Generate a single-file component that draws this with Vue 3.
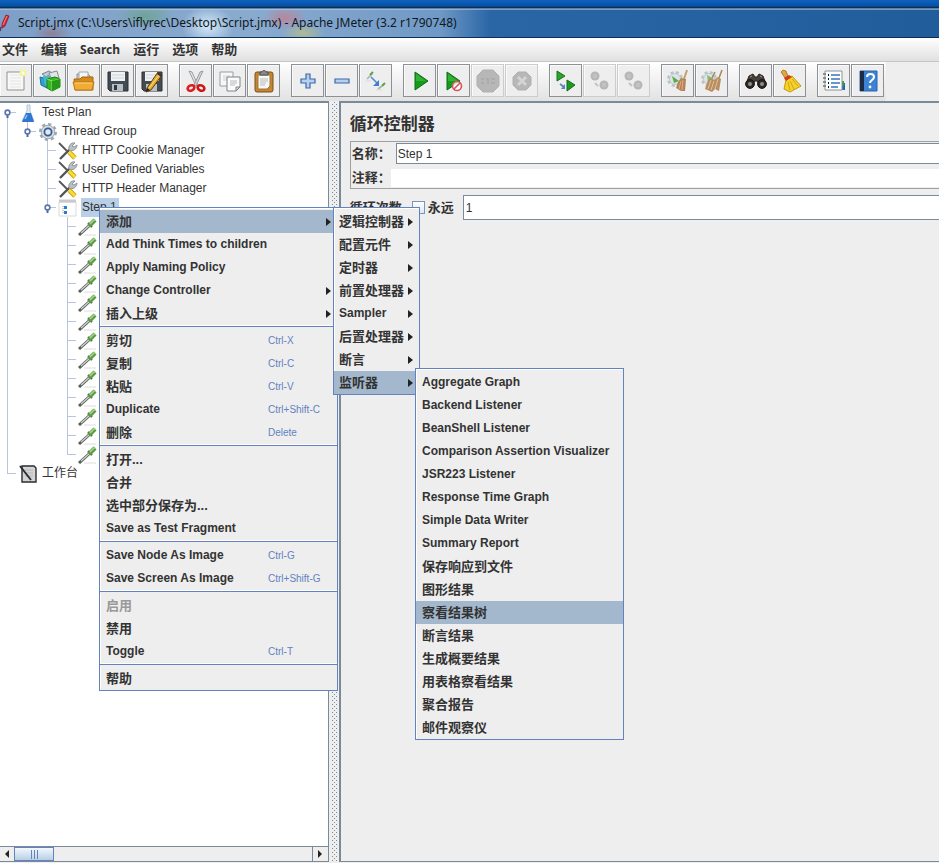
<template>
  <div class="window">
    <header class="titlebar">
      <svg class="app-icon" width="10" height="18" viewBox="0 0 10 18">
        <path d="M6 1L9 2L5 12L2 14L2 10Z" fill="#d8232f" stroke="#8d1a3a" stroke-width=".8" />
        <path d="M7 2L3 11" stroke="#ff8a70" />
        <path d="M1 13L0 17" stroke="#5b3766" stroke-width="1.5" />
      </svg>
      <span class="title">Script.jmx (C:\Users\iflyrec\Desktop\Script.jmx) - Apache JMeter (3.2 r1790748)</span>
    </header>

    <nav class="menubar">
      <button v-for="m in menus" :key="m" type="button" :class="{ latin: !isCjk(m) }">{{ m }}</button>
    </nav>

    <div class="toolbar">
      <div v-for="(group, gi) in toolGroups" :key="gi" class="tool-group">
        <button
          v-for="t in group"
          :key="t.name"
          type="button"
          class="tool"
          :disabled="t.off"
          :aria-label="t.name"
        >
          <svg width="24" height="24" viewBox="0 0 24 24" fill="none" v-html="icons[t.icon]"></svg>
        </button>
      </div>
    </div>

    <main class="body">
      <section class="tree-pane">
        <ul class="tree">
          <li v-for="(row, i) in rows" :key="i" class="tree-row">
            <svg v-for="(g, gi) in row.guides" :key="gi" class="guide" width="20" height="19" viewBox="0 0 20 19">
              <path :d="guidePaths[g]" fill="none" stroke="#b8c5de" />
              <template v-if="g.startsWith('node')">
                <path d="M10.5 11V15" stroke="#4a6ba5" stroke-width="2" />
                <circle cx="10.5" cy="9.5" r="2.4" fill="#fff" stroke="#5a78ad" stroke-width="1.6" />
              </template>
            </svg>
            <svg class="node-icon" width="20" height="19" viewBox="0 0 20 19" fill="none" v-html="nodeIcons[row.icon]"></svg>
            <span v-if="row.label" class="node-label" :class="{ selected: row.selected }">{{ row.label }}</span>
          </li>
        </ul>
        <div class="scrollbar">
          <button type="button" class="scroll-btn" aria-label="left">
            <svg width="6" height="8" viewBox="0 0 6 8"><path d="M5 0V8L1 4Z" fill="#222" /></svg>
          </button>
          <div class="track"><div class="thumb"><i></i><i></i><i></i></div></div>
          <button type="button" class="scroll-btn right" aria-label="right">
            <svg width="6" height="8" viewBox="0 0 6 8"><path d="M1 0V8L5 4Z" fill="#222" /></svg>
          </button>
        </div>
      </section>

      <div class="splitter"></div>

      <section class="editor">
        <h1>循环控制器</h1>
        <div class="name-box">
          <div class="field">
            <label for="name">名称：</label>
            <input id="name" v-model="name" class="boxed" type="text" />
          </div>
          <div class="field">
            <label for="comment">注释：</label>
            <input id="comment" v-model="comment" type="text" />
          </div>
        </div>
        <div class="loop">
          <label for="count">循环次数</label>
          <input id="forever" v-model="forever" type="checkbox" />
          <label for="forever" class="forever">永远</label>
          <input id="count" v-model="count" class="count" type="text" />
        </div>
      </section>
    </main>

    <ul class="popup context">
      <template v-for="(item, i) in contextMenu" :key="i">
        <li v-if="item.sep" class="sep"></li>
        <li v-else class="item" :class="{ active: item.children }">
          <button type="button" :disabled="item.off">
            <span :class="{ cjk: isCjk(item.label) }">{{ item.label }}</span>
            <kbd v-if="item.key">{{ item.key }}</kbd>
            <svg v-if="item.more" class="arrow" width="5" height="8" viewBox="0 0 5 8"><path d="M0 0V8L5 4Z" /></svg>
          </button>
          <ul v-if="item.children" class="popup sub add">
            <li v-for="c in item.children" :key="c.label" class="item" :class="{ active: c.children }">
              <button type="button">
                <span :class="{ cjk: isCjk(c.label) }">{{ c.label }}</span>
                <svg class="arrow" width="5" height="8" viewBox="0 0 5 8"><path d="M0 0V8L5 4Z" /></svg>
              </button>
              <ul v-if="c.children" class="popup sub listeners">
                <li v-for="l in c.children" :key="l" class="item" :class="{ active: l === current }">
                  <button type="button" @click="current = l"><span :class="{ cjk: isCjk(l) }">{{ l }}</span></button>
                </li>
              </ul>
            </li>
          </ul>
        </li>
      </template>
    </ul>
  </div>
</template>

<script setup>
import { ref } from 'vue'

const name = ref('Step 1')
const comment = ref('')
const count = ref('1')
const forever = ref(false)
const current = ref('察看结果树')

const isCjk = (text) => /[\u4e00-\u9fff]/.test(text)

const menus = ['文件', '编辑', 'Search', '运行', '选项', '帮助']

const toolGroups = [
  [
    { name: 'New', icon: 'file' },
    { name: 'Templates', icon: 'templates' },
    { name: 'Open', icon: 'open' },
    { name: 'Save', icon: 'save' },
    { name: 'Save as', icon: 'saveAs' },
  ],
  [
    { name: 'Cut', icon: 'cut' },
    { name: 'Copy', icon: 'copy' },
    { name: 'Paste', icon: 'paste' },
  ],
  [
    { name: 'Expand all', icon: 'plus' },
    { name: 'Collapse all', icon: 'minus' },
    { name: 'Toggle', icon: 'toggle' },
  ],
  [
    { name: 'Start', icon: 'start' },
    { name: 'Start no pauses', icon: 'startNoPause' },
    { name: 'Stop', icon: 'stop', off: true },
    { name: 'Shutdown', icon: 'shutdown', off: true },
  ],
  [
    { name: 'Remote start all', icon: 'remoteStart' },
    { name: 'Remote stop all', icon: 'remoteStop', off: true },
    { name: 'Remote shutdown all', icon: 'remoteStop', off: true },
  ],
  [
    { name: 'Clear', icon: 'clear' },
    { name: 'Clear all', icon: 'clearAll' },
  ],
  [
    { name: 'Find', icon: 'find' },
    { name: 'Reset search', icon: 'broom' },
  ],
  [
    { name: 'Function helper', icon: 'list' },
    { name: 'Help', icon: 'help' },
  ],
]

const disk = `
  <path d="M2 3H22V22H4L2 20Z" fill="#444b52" stroke="#2b3034"/>
  <path d="M5 3H19V12H5Z" fill="#eef2f4"/>
  <path d="M6 6H18M6 9H18" stroke="#cdd3d8"/>
  <path d="M6 15H17V22H6Z" fill="#b9c0c5"/>
  <path d="M8 16H11V21H8Z" fill="#30363b"/>`

const gearBrush = `
  <circle cx="9" cy="10" r="6.5" stroke="#b9c4ca" stroke-width="3" stroke-dasharray="3 2.1"/>
  <circle cx="9" cy="10" r="5.5" fill="#dce4e8" stroke="#bcc7cd"/>`

const icons = {
  file: `
    <path d="M3 3H20V21H3Z" fill="#f7f8f7" stroke="#90938f"/>
    <path d="M6 6H17M6 9H17M6 12H17M6 15H17M6 18H17" stroke="#e3e5e3"/>
    <circle cx="19" cy="4" r="3.5" fill="#f5f3a0"/><circle cx="19" cy="4" r="1.5" fill="#fffde0"/>`,
  templates: `
    <path d="M4 5L11 2L14 4L8 8Z" fill="#c5cbd0" stroke="#7d868c"/>
    <path d="M11 4L19 2L21 9L13 9Z" fill="#dfe5e9" stroke="#858e94"/>
    <path d="M2 8L9 10V19L3 16Z" fill="#2f9fd0" stroke="#1e6f9d"/>
    <path d="M5 7L12 7V19L7 16Z" fill="#43b9c9"/>
    <path d="M9 10L17 8L22 10V18L14 22L9 19Z" fill="#39b822" stroke="#218414"/>
    <path d="M9 10L14 12L22 10M14 12V22" stroke="#8be271"/>
    <path d="M14 12L22 10V18L14 22Z" fill="#249a17"/>`,
  open: `
    <path d="M5 5H16L18 7V14H5Z" fill="#cfd3d6" stroke="#8c9195"/>
    <path d="M7 3H16V12H7Z" fill="#f5f6f6" stroke="#a2a6a9"/>
    <path d="M2 10H8L10 8H21V21H3Z" fill="#d98b1a" stroke="#a9660e"/>
    <path d="M1 13H22L20 21H3Z" fill="#f0ad36" stroke="#bb7915"/>
    <path d="M3 14H20" stroke="#fbd37f"/>`,
  save: disk,
  saveAs: `${disk}
    <path d="M7 19L18 3L22 6L11 21L6 23Z" fill="#e8a92c" stroke="#58411a"/>
    <path d="M9 19L20 5" stroke="#ffe086"/><path d="M6 23L7 19L10 21Z" fill="#222"/>
    <path d="M18 3L22 6L21 8L17 5Z" fill="#333"/>`,
  cut: `
    <path d="M5 2L8 3L14 16L12 17Z" fill="#dfe3e5" stroke="#898f93" stroke-width=".8"/>
    <path d="M19 2L16 3L10 16L12 17Z" fill="#cdd3d6" stroke="#898f93" stroke-width=".8"/>
    <ellipse cx="7" cy="19" rx="3.5" ry="2.6" transform="rotate(-25 7 19)" stroke="#e01b1b" stroke-width="2.6"/>
    <ellipse cx="17" cy="19" rx="3.5" ry="2.6" transform="rotate(25 17 19)" stroke="#d01414" stroke-width="2.6"/>`,
  copy: `
    <path d="M2 3H15V17H2Z" fill="#f7f8f8" stroke="#999d9f"/>
    <path d="M5 7H12M5 9H12M5 11H12" stroke="#cdd0d2"/>
    <path d="M9 8H22V18L18 22H9Z" fill="#fbfbfb" stroke="#7e8385"/>
    <path d="M12 12H19M12 14H19M12 16H17" stroke="#b3b7b9"/><path d="M18 22V18H22Z" fill="#d5d8da" stroke="#7e8385"/>`,
  paste: `
    <rect x="3" y="3" width="18" height="20" rx="2" fill="#c48631" stroke="#7d501a"/>
    <path d="M6 6H18V17L15 20H6Z" fill="#f6f7f7" stroke="#a3743a"/>
    <path d="M8 10H16M8 12H16M8 14H14M8 16H13" stroke="#b5babc"/>
    <path d="M8 3H10C10 1 14 1 14 3H16V6H8Z" fill="#858b8f" stroke="#4b5154"/>`,
  plus: `<path d="M10 5H14V10H19V14H14V19H10V14H5V10H10Z" fill="#b7d0ee" stroke="#3a68a8" stroke-width="1.2"/>`,
  minus: `<path d="M5 10H19V14H5Z" fill="#b7d0ee" stroke="#3a68a8" stroke-width="1.2"/>`,
  toggle: `
    <path d="M3 10L8 5" stroke="#a9b4ad" stroke-width="1.6"/><path d="M6 6L9 3" stroke="#5d9f50" stroke-width="2"/>
    <path d="M14 20L18 17" stroke="#a9b4ad" stroke-width="1.6"/><path d="M18 17L21 14" stroke="#5d9f50" stroke-width="2"/>
    <path d="M7 8L13 14" stroke="#4d8ad3" stroke-width="1.6"/><path d="M15 11V17H9Z" fill="#3d7fd0"/>
    <path d="M2 12H7M12 21H18" stroke="#d9dcd9"/>`,
  start: `<path d="M7 3V21L20 12Z" fill="#159a1b" stroke="#0c6e14"/><path d="M8 5V12H18Z" fill="#37b037"/>`,
  startNoPause: `
    <path d="M5 3V21L18 12Z" fill="#159a1b" stroke="#0c6e14"/><path d="M6 5V12H16Z" fill="#37b037"/>
    <circle cx="15" cy="17" r="4.5" fill="#fff" fill-opacity=".8" stroke="#d2555e" stroke-width="1.6"/>
    <path d="M12 20L18 14" stroke="#d2555e" stroke-width="1.6"/>`,
  stop: `
    <path d="M7 1H17L23 7V17L17 23H7L1 17V7Z" fill="#b7b7b7" stroke="#b0b0b0"/>
    <path d="M5 10H8M5 14H8M10 10H13M12 10V15M15 10H19M15 14H19" stroke="#a9a9a9" stroke-width="1.5"/>`,
  shutdown: `
    <path d="M8 3H16L21 8V16L16 21H8L3 16V8Z" fill="#b7b7b7" stroke="#b0b0b0"/>
    <path d="M8 8L16 16M16 8L8 16" stroke="#d4d4d4" stroke-width="3"/>`,
  remoteStart: `
    <path d="M3 2V12L11 7Z" fill="#2ca42b" stroke="#16751b"/>
    <path d="M13 11V22L21 16Z" fill="#1d9a22" stroke="#116b17"/>
    <path d="M6 15L10 18" stroke="#5b83bd" stroke-width="1.6"/><path d="M11 15V20H7Z" fill="#5b83bd"/>`,
  remoteStop: `
    <circle cx="7" cy="7" r="4.5" fill="#b7b7b7"/><path d="M5 6H9M5 8H9" stroke="#cdcdcd"/>
    <circle cx="16" cy="16" r="4.5" fill="#b7b7b7"/><path d="M14 15H18M14 17H18" stroke="#cdcdcd"/>
    <path d="M7 14L10 17" stroke="#c3c3c3" stroke-width="2"/>`,
  clear: `${gearBrush}
    <path d="M6 7L13 12L8 14Z" fill="#58ad46"/>
    <path d="M21 1L18 10" stroke="#c2a06c" stroke-width="2"/>
    <path d="M12 13L15 9L20 10L19 22L15 22L10 19Z" fill="#b5835a"/>
    <path d="M15 12L13 20M17 11L16 21" stroke="#ddb080"/>`,
  clearAll: `${gearBrush}
    <path d="M7 6L14 10L8 13Z" fill="#7dbf66"/>
    <path d="M15 3L12 9M22 1L19 9" stroke="#a98a5d" stroke-width="1.6"/>
    <path d="M8 11L11 9L14 11L18 8L21 10L19 22L15 20L12 23L5 20Z" fill="#b98d62"/>
    <path d="M11 11L8 20M14 12L11 21M18 10L15 20" stroke="#dec19a"/>`,
  find: `
    <path d="M5 7L9 5L11 8H13L15 5L19 7L22 15H15L13 12H11L9 15H2Z" fill="#47413c" stroke="#28231f"/>
    <circle cx="6" cy="15" r="4.4" fill="#2d2926" stroke="#171412"/><circle cx="18" cy="15" r="4.4" fill="#2d2926" stroke="#171412"/>
    <circle cx="6" cy="15" r="2" fill="#8e8d88"/><circle cx="18" cy="15" r="2" fill="#8e8d88"/>
    <path d="M6 8L8 7M16 7L18 8" stroke="#a09a91"/>`,
  broom: `
    <path d="M3 3L5 1L8 2L10 7L7 9L5 6Z" fill="#e0a53c" stroke="#a1701c" stroke-width=".8"/>
    <path d="M8 11L14 7L23 17L12 23L6 20Z" fill="#f3d329" stroke="#c5970f"/>
    <path d="M6 9L11 6L14 8L8 12Z" fill="#d33a1a"/>
    <path d="M10 13L12 21M12 12L16 20M14 10L20 17" stroke="#d1a318"/>`,
  list: `
    <path d="M17 14H23V21H17Z" fill="#2469a8"/><path d="M20 12H22V17H20Z" fill="#2f9a47"/>
    <path d="M3 2H20V21H3Z" fill="#fcfdfe" stroke="#8d9499"/>
    <path d="M1 5H4M1 9H4M1 13H4M1 17H4" stroke="#777" stroke-width="1.3"/>
    <path d="M9 6H18M9 10H18M9 14H18M9 18H16" stroke="#3773be" stroke-width="1.4"/>
    <path d="M6 6H7M6 10H7M6 14H7M6 18H7" stroke="#111" stroke-width="2"/>`,
  help: `
    <path d="M4 2H21V22H4Z" fill="#3c83d4" stroke="#2a63ab"/><path d="M4 2H8V22H4Z" fill="#1d2c44"/>
    <path d="M11 8C11 4 18 4 18 8C18 11 14 11 14 14" stroke="#fff" stroke-width="2"/>
    <circle cx="14" cy="18" r="1.4" fill="#fff"/>`,
}

const nodeIcons = {
  flask: `
    <path d="M9 2H12V8L16 18H4L9 8Z" fill="#dceaf6" stroke="#b4c6d4"/>
    <path d="M8 10H13L16 19H4Z" fill="#2e77d0"/><path d="M7 16L9 12" stroke="#8fc0f5" stroke-width="1.5"/>`,
  gear: `
    <circle cx="10" cy="10" r="7.8" stroke="#9aa7af" stroke-width="2.4" stroke-dasharray="3.2 2.9"/>
    <circle cx="10" cy="10" r="6.8" fill="#d3dce1" stroke="#9aa7af"/>
    <circle cx="10" cy="10" r="3.6" fill="#dfeaf6" stroke="#3a5c96" stroke-width="1.8"/>`,
  tools: `
    <path d="M2 18L12 8" stroke="#50555a" stroke-width="2.4"/>
    <path d="M11 9C10 5 13 1 17 2L14 5L16 6L19 4C19 8 15 11 11 9Z" fill="#b9c0c4" stroke="#8f969b"/>
    <path d="M1 2L10 11" stroke="#555" stroke-width="1.8"/>
    <path d="M11 11L17 17" stroke="#c9a40d" stroke-width="4.6"/><path d="M11 11L17 17" stroke="#f7dc3b" stroke-width="2.8"/>`,
  loop: `
    <path d="M1 4H18V18H1Z" fill="#fdfdfd" stroke="#dadada"/><path d="M1 3H18" stroke="#c9c9c9" stroke-width="3"/>
    <path d="M5 8V15" stroke="#999" stroke-dasharray="1 1"/>
    <rect x="6" y="8" width="3" height="3" fill="#2d7cc9"/><rect x="6" y="13" width="3" height="3" fill="#2d7cc9"/>`,
  dropper: `
    <path d="M6 18H18" stroke="#dcdcdc"/>
    <path d="M1 18L12 8" stroke="#59605b" stroke-width="3"/>
    <path d="M3 16L12 8" stroke="#d2d6d3" stroke-width="1.2"/>
    <path d="M10 6L14 10" stroke="#3f5a38" stroke-width="2"/>
    <path d="M11 9L17 3" stroke="#5c9a44" stroke-width="4.4"/>
    <path d="M12 7L17 2" stroke="#a5d68b" stroke-width="1.6"/>`,
  bench: `
    <path d="M4 2H16L18 4V18H4Z" fill="#d4d6d6" stroke="#2b2d2e" stroke-width="1.4"/>
    <path d="M7 6H15M7 9H15M7 12H15" stroke="#b4b7b7"/>
    <path d="M2 2L13 16" stroke="#2b2d2e" stroke-width="2"/>`,
}

const guidePaths = {
  none: '',
  line: 'M10.5 0V19',
  tee: 'M10.5 0V19M10 9.5H19',
  end: 'M10.5 0V10M10 9.5H19',
  nodeTop: 'M10.5 9V19M10 9.5H19',
  node: 'M10.5 0V10M10 9.5H19',
}

const rows = [
  { label: 'Test Plan', icon: 'flask', guides: ['nodeTop'] },
  { label: 'Thread Group', icon: 'gear', guides: ['line', 'node'] },
  { label: 'HTTP Cookie Manager', icon: 'tools', guides: ['line', 'none', 'tee'] },
  { label: 'User Defined Variables', icon: 'tools', guides: ['line', 'none', 'tee'] },
  { label: 'HTTP Header Manager', icon: 'tools', guides: ['line', 'none', 'tee'] },
  { label: 'Step 1', icon: 'loop', guides: ['line', 'none', 'node'], selected: true },
  ...Array.from({ length: 13 }, (_, i) => ({
    icon: 'dropper',
    guides: ['line', 'none', 'none', i === 12 ? 'end' : 'tee'],
  })),
  { label: '工作台', icon: 'bench', guides: ['end'] },
]

const listeners = [
  'Aggregate Graph', 'Backend Listener', 'BeanShell Listener', 'Comparison Assertion Visualizer',
  'JSR223 Listener', 'Response Time Graph', 'Simple Data Writer', 'Summary Report',
  '保存响应到文件', '图形结果', '察看结果树', '断言结果', '生成概要结果', '用表格察看结果', '聚合报告', '邮件观察仪',
]

const addMenu = [
  { label: '逻辑控制器' },
  { label: '配置元件' },
  { label: '定时器' },
  { label: '前置处理器' },
  { label: 'Sampler' },
  { label: '后置处理器' },
  { label: '断言' },
  { label: '监听器', children: listeners },
]

const contextMenu = [
  { label: '添加', more: true, children: addMenu },
  { label: 'Add Think Times to children' },
  { label: 'Apply Naming Policy' },
  { label: 'Change Controller', more: true },
  { label: '插入上级', more: true },
  { sep: true },
  { label: '剪切', key: 'Ctrl-X' },
  { label: '复制', key: 'Ctrl-C' },
  { label: '粘贴', key: 'Ctrl-V' },
  { label: 'Duplicate', key: 'Ctrl+Shift-C' },
  { label: '删除', key: 'Delete' },
  { sep: true },
  { label: '打开...' },
  { label: '合并' },
  { label: '选中部分保存为...' },
  { label: 'Save as Test Fragment' },
  { sep: true },
  { label: 'Save Node As Image', key: 'Ctrl-G' },
  { label: 'Save Screen As Image', key: 'Ctrl+Shift-G' },
  { sep: true },
  { label: '启用', off: true },
  { label: '禁用' },
  { label: 'Toggle', key: 'Ctrl-T' },
  { sep: true },
  { label: '帮助' },
]
</script>

<style>
body {
  overflow: hidden;
}
</style>

<style scoped>
.window {
  position: relative;
  display: flex;
  flex-direction: column;
  height: 100vh;
  overflow: hidden;
  background: #eee;
  color: #333;
  font: 12px/19px "Liberation Sans", "Noto Sans CJK SC", sans-serif;
}
.window * {
  box-sizing: border-box;
}
button {
  padding: 0;
  border: 0;
  background: none;
  font: inherit;
  color: inherit;
}
ul {
  list-style: none;
  margin: 0;
  padding: 0;
}

.titlebar {
  display: flex;
  align-items: center;
  height: 38px;
  padding-top: 9px;
  border-bottom: 1px solid #0d2f56;
  color: #101820;
  font: 12px/18px "Noto Sans", sans-serif;
  background:
    linear-gradient(#0c62c0, #0850a2 6px, #06254c 8px, #c4d9ec 9px, transparent 10px),
    radial-gradient(ellipse 20px 10px at 52px 34px, #8e8095, transparent),
    radial-gradient(ellipse 30px 12px at 145px 16px, #6ea495, transparent),
    radial-gradient(ellipse 26px 20px at 208px 26px, #d3e9f8, transparent),
    radial-gradient(ellipse 22px 12px at 285px 18px, #b9869a, transparent),
    radial-gradient(ellipse 22px 10px at 303px 33px, #b0ba95, transparent),
    linear-gradient(90deg, #7d9fc8, #8aabd0 250px, #6f99c6 440px, #2a66a6 490px, #215c9b);
}
.app-icon {
  margin-right: 8px;
}

.menubar {
  display: flex;
  gap: 13px;
  height: 24px;
  padding: 0 2px;
  border-bottom: 1px solid #c6c6c6;
  background: linear-gradient(#fff, #e0e0e0);
  font-size: 13px;
  font-weight: bold;
}
.menubar .latin {
  font: bold 12px/19px "Noto Sans", sans-serif;
}

.toolbar {
  display: flex;
  gap: 10px;
  height: 39px;
  margin-left: -1px;
  padding-top: 2px;
  background: linear-gradient(90deg, transparent 886px, #eee 887px), linear-gradient(#fff, #e2e2e2);
}
.tool-group {
  display: flex;
  gap: 1px;
  flex-shrink: 0;
}
.tool-group + .tool-group {
  margin-left: 1px;
}
.tool {
  display: flex;
  align-items: center;
  justify-content: center;
  width: 33px;
  height: 33px;
  border: 1px solid #8c9196;
  background: #eee;
  box-shadow: inset 1px 1px #fafafa;
}
.tool:disabled {
  border-color: #ccc;
}

.body {
  display: flex;
  flex: 1;
  min-height: 0;
  margin-bottom: 1px;
}
.tree-pane {
  display: flex;
  flex-direction: column;
  width: 35%;
  border: 1px solid #7a8a99;
  border-width: 2px 1px 1px 0;
  background: #fff;
}
.tree {
  flex: 1;
  min-height: 0;
  overflow: hidden;
  margin-left: -3px;
}
.tree-row {
  display: flex;
  height: 19px;
}
.guide {
  flex-shrink: 0;
}
.node-icon {
  flex-shrink: 0;
  margin: 0 3px 0 1px;
}
.node-label {
  padding: 0 2px 0 1px;
  line-height: 18px;
}
.selected {
  background: #b8cfe5;
}

.scrollbar {
  display: flex;
  height: 15px;
  border-top: 1px solid #7a8a99;
}
.scroll-btn {
  display: flex;
  align-items: center;
  justify-content: center;
  width: 14px;
  background: #eee;
}
.scroll-btn.right {
  width: 16px;
  border-left: 1px solid #7a8a99;
}
.track {
  flex: 1;
  background: #eee;
}
.thumb {
  display: flex;
  justify-content: center;
  align-items: center;
  gap: 2px;
  width: 40px;
  height: 14px;
  border: 1px solid #6382bf;
  background: linear-gradient(#f3f8fd, #b8cfe5);
}
.thumb i {
  width: 1px;
  height: 9px;
  background: #6382bf;
}

/* staggered 1px grip dots */
.splitter {
  width: 10px;
  padding: 0 1px 0 2px;
  background-color: #eee;
  background-image:
    conic-gradient(from 90deg at 3px 3px, #7f8d9b 25%, transparent 0),
    conic-gradient(from 90deg at 3px 3px, #7f8d9b 25%, transparent 0);
  background-size: 4px 4px;
  background-position: 0 0, 2px 2px;
  background-clip: content-box;
}

.editor {
  flex: 1;
  min-width: 0;
  overflow: hidden;
  padding-left: 9px;
  border: 2px solid #7a8a99;
  border-width: 2px 0 1px 2px;
  background: #eee;
}
h1 {
  margin: 10px 0 4px;
  font-size: 17px;
  line-height: 24px;
}
.name-box {
  display: flex;
  flex-direction: column;
  gap: 4px;
  padding: 1px 0 1px 1px;
  border: 1px solid #a0a0a0;
  border-right: 0;
}
.field,
.loop {
  display: flex;
  align-items: center;
  font-size: 13px;
  font-weight: bold;
}
.field label {
  width: 39px;
  white-space: nowrap;
}
input {
  margin: 0;
  color: #333;
  font: 12px/18px "Liberation Sans", sans-serif;
}
input[type="text"] {
  flex: 1;
  min-width: 0;
  height: 18px;
  padding: 0 2px;
  border: 0;
  background: #fff;
}
input.boxed {
  height: 21px;
  margin-left: 5px;
  padding: 0 1px;
  border: 1px solid #7a8a99;
  border-right: 0;
}
.loop {
  margin-top: 6px;
}
input[type="checkbox"] {
  appearance: none;
  width: 13px;
  height: 13px;
  margin: 0 3px 0 10px;
  border: 1px solid #7a94c0;
  background: linear-gradient(#fff, #dce8f4);
}
.forever {
  margin-right: 9px;
}
input.count {
  height: 25px;
  border: 1px solid #7a8a99;
  border-right: 0;
}

.popup {
  position: absolute;
  padding-top: 2px;
  border: 1px solid #6382bf;
  background: #eee;
  box-shadow: inset 1px 1px #fff;
  font-weight: bold;
}
.context {
  top: 207px;
  left: 99px;
  width: 239px;
}
.item {
  position: relative;
}
.item > button {
  display: flex;
  align-items: center;
  width: 100%;
  height: 23px;
  padding: 0 6px;
  white-space: nowrap;
  text-align: left;
}
.item > button:disabled {
  color: #999;
}
.active > button {
  background: #a3b8cc;
}
.item span {
  flex: 1;
}
.item .cjk {
  font-size: 13px;
}
.sep {
  height: 4px;
  border-top: 1px solid #fff;
  background: linear-gradient(#6382bf 1px, #eee 1px);
}
kbd {
  width: 63px;
  color: #6382bf;
  font: 10px/12px "Liberation Sans", sans-serif;
}
.arrow {
  fill: #222;
}
.sub {
  top: -3px;
  left: calc(100% - 4px);
  z-index: 1;
}
.add {
  width: 87px;
}
.add > .item > button {
  padding-left: 5px;
}
.listeners {
  width: 209px;
}
</style>
